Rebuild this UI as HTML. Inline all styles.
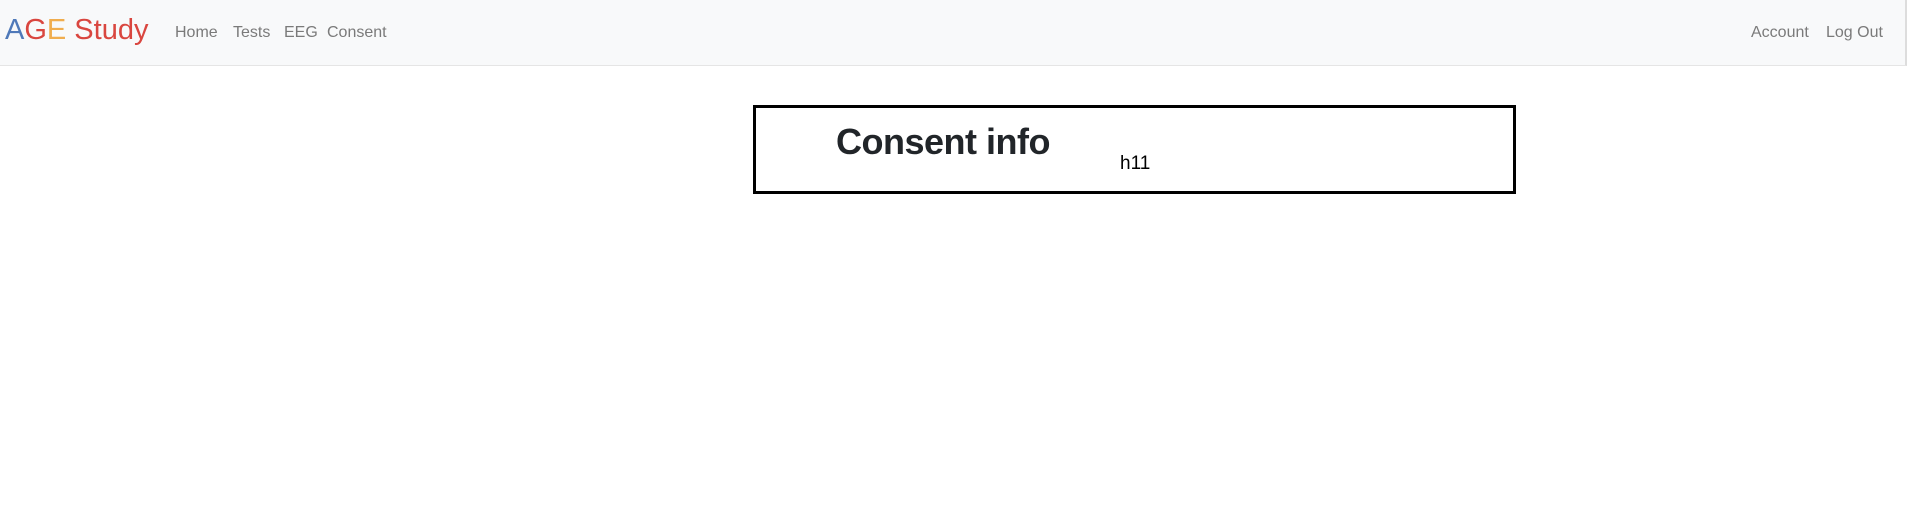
<!DOCTYPE html>
<html><head><style>
body{margin:0;width:1907px;height:523px;background:#fff;font-family:"Liberation Sans",sans-serif;position:relative;overflow:hidden}
.nav{position:absolute;left:0;top:0;width:1905px;height:65px;background:#f8f9fa;border-bottom:1px solid #e5e5e5;border-right:2px solid #ddd}
.brand{position:absolute;left:5px;top:14px;font-size:29px;color:#d9463f}
.l{position:absolute;top:24px;font-size:16px;color:#7a7a7a}
.box{position:absolute;left:753px;top:105px;width:757px;height:83px;border:3px solid #000}
h1{position:absolute;left:80px;top:13px;margin:0;font-size:36px;font-weight:bold;color:#212529;letter-spacing:-0.5px}
.h11{position:absolute;left:364px;top:45px;font-size:19px;color:#000}
</style></head><body>
<div class="nav">
<div class="brand"><span style="color:#4f79b9">A</span><span style="color:#d9463f">G</span><span style="color:#f0ad4e">E</span> Study</div>
<span class="l" style="left:175px">Home</span>
<span class="l" style="left:233px">Tests</span>
<span class="l" style="left:284px">EEG</span>
<span class="l" style="left:327px">Consent</span>
<span class="l" style="left:1751px">Account</span>
<span class="l" style="left:1826px">Log Out</span>
</div>
<div class="box"><h1>Consent info</h1><span class="h11">h11</span></div>
</body></html>
